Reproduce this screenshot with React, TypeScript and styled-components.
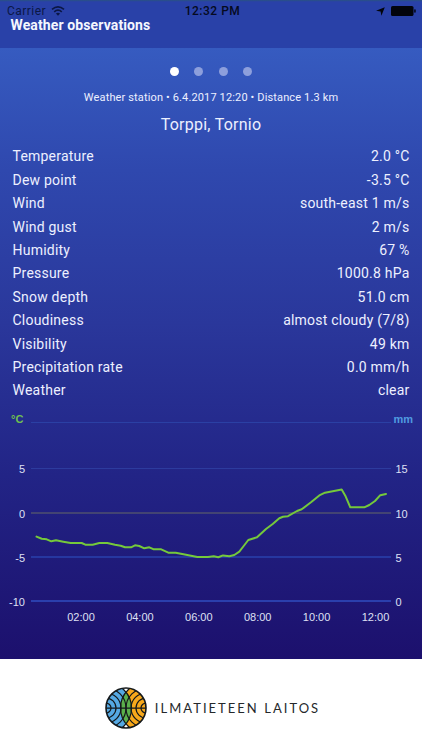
import React from 'react';
import styled, { createGlobalStyle } from 'styled-components';

type Observation = {
  label: string;
  value: string;
};

const OBSERVATIONS: Observation[] = [
  { label: 'Temperature', value: '2.0 °C' },
  { label: 'Dew point', value: '-3.5 °C' },
  { label: 'Wind', value: 'south-east 1 m/s' },
  { label: 'Wind gust', value: '2 m/s' },
  { label: 'Humidity', value: '67 %' },
  { label: 'Pressure', value: '1000.8 hPa' },
  { label: 'Snow depth', value: '51.0 cm' },
  { label: 'Cloudiness', value: 'almost cloudy (7/8)' },
  { label: 'Visibility', value: '49 km' },
  { label: 'Precipitation rate', value: '0.0 mm/h' },
  { label: 'Weather', value: 'clear' },
];

const GRID_LINES = [
  { y: 20.5, left: '', right: '', color: '#2b40a4', width: 1 },
  { y: 66.5, left: '5', right: '15', color: '#2d3b9e', width: 1 },
  { y: 111, left: '0', right: '10', color: '#434473', width: 2 },
  { y: 155, left: '-5', right: '5', color: '#2637a0', width: 2 },
  { y: 199, left: '-10', right: '0', color: '#2b3fad', width: 2 },
];

const HOURS = ['02:00', '04:00', '06:00', '08:00', '10:00', '12:00'];

const TEMPERATURE_POINTS: [number, number][] = [
  [36.5, 134.6], [41.7, 136.7], [46.7, 137.3], [51.3, 139.3], [56, 138.3],
  [63.3, 139.7], [70.7, 141], [81.7, 141], [85.3, 142.7], [92.7, 142.7],
  [99.3, 141], [107.3, 141], [115, 142.7], [120.7, 143.7], [125, 145.3],
  [131, 145.3], [135, 143.3], [139.3, 144], [144.3, 146.3], [149.3, 145.3],
  [153.3, 147.2], [160.7, 147.2], [168.3, 150.7], [175.7, 150.7], [186, 152.7],
  [197.3, 155], [208, 155], [213.7, 154.3], [218.3, 155.3], [223, 153.4],
  [229.3, 154.3], [234.3, 153], [239.3, 149.7], [243.3, 144.5], [248.3, 138],
  [257, 135.3], [266, 127], [272.7, 122], [279.3, 116.3], [283, 114.8],
  [288, 114.2], [297, 109], [301.7, 107.3], [311, 100.3], [319.3, 93.4],
  [325, 90.7], [341.7, 87.6], [345.3, 93.7], [350.3, 105.3], [364.3, 105.3],
  [369.3, 103], [375, 99], [380.3, 93.2], [386, 92],
];

const RINGS = [5, 10, 15, 20, 25.5];

function StatusBar() {
  return (
    <StatusRow>
      <Carrier>
        Carrier
        <svg width="14" height="10" viewBox="0 0 14 10" fill="none" stroke="currentColor">
          <path d="M1 3.4Q7-1.6 13 3.4" strokeWidth="1.7" />
          <path d="M3.2 5.8Q7 2.5 10.8 5.8" strokeWidth="1.6" />
          <path d="M7 9.7L4.9 7.5Q7 5.8 9.1 7.5Z" fill="currentColor" stroke="none" />
        </svg>
      </Carrier>
      <Clock>12:32 PM</Clock>
      <Indicators>
        <svg width="9" height="9" viewBox="0 0 9 9">
          <path d="M8.8 0.2L5.4 8.8L4.6 4.5L0 3.8Z" fill="currentColor" />
        </svg>
        <svg width="25" height="10" viewBox="0 0 25 10" fill="currentColor">
          <rect x="0" y="0" width="22.5" height="10" rx="1.6" />
          <rect x="23.2" y="3.2" width="1.5" height="3.6" rx="0.7" />
        </svg>
      </Indicators>
    </StatusRow>
  );
}

function TemperatureChart() {
  const line = TEMPERATURE_POINTS.map(([x, y]) => `${x},${y}`).join(' ');

  return (
    <Chart width="422" height="251" viewBox="0 6 422 251">
      {GRID_LINES.map(({ y, left, right, color, width }) => (
        <g key={y}>
          <line x1="31" x2="391" y1={y} y2={y} stroke={color} strokeWidth={width} />
          <AxisText x="25" y={y + 4.5} textAnchor="end">
            {left}
          </AxisText>
          <AxisText x="395.5" y={y + 4.5}>
            {right}
          </AxisText>
        </g>
      ))}
      <UnitText x="11" y="21" $color="#70c050">
        °C
      </UnitText>
      <UnitText x="393.5" y="21" $color="#509be0">
        mm
      </UnitText>
      {HOURS.map((hour, i) => (
        <AxisText key={hour} x={81 + i * 58.9} y="218.5" textAnchor="middle">
          {hour}
        </AxisText>
      ))}
      <polyline
        points={line}
        fill="none"
        stroke="#75c93b"
        strokeWidth="2"
        strokeLinejoin="round"
        strokeLinecap="round"
      />
    </Chart>
  );
}

function Logo() {
  return (
    <svg width="42" height="42" viewBox="0 0 42 42">
      <defs>
        <clipPath id="globe">
          <circle cx="21" cy="21" r="20" />
        </clipPath>
        <clipPath id="west">
          <circle cx="1" cy="21" r="25.5" />
        </clipPath>
      </defs>
      <circle cx="21" cy="21" r="20" fill="#fff" />
      <g clipPath="url(#globe)">
        <circle cx="1" cy="21" r="25.5" fill="#55a9e3" />
        <circle cx="41" cy="21" r="25.5" fill="#f7a81b" />
        <circle cx="41" cy="21" r="25.5" fill="#5bb04c" clipPath="url(#west)" />
        <g fill="none" stroke="#15191b" strokeWidth="1.25">
          {RINGS.map((r) => (
            <React.Fragment key={r}>
              <circle cx="1" cy="21" r={r} />
              <circle cx="41" cy="21" r={r} />
            </React.Fragment>
          ))}
          <path d="M1 21H41" />
        </g>
      </g>
      <circle cx="21" cy="21" r="20" fill="none" stroke="#15191b" strokeWidth="1.6" />
    </svg>
  );
}

export default function App() {
  return (
    <Screen>
      <GlobalStyle />
      <Header>
        <StatusBar />
        <Title>Weather observations</Title>
      </Header>
      <Content>
        <Pager>
          {[0, 1, 2, 3].map((page) => (
            <Dot key={page} $active={page === 0} />
          ))}
        </Pager>
        <Station>Weather station • 6.4.2017 12:20 • Distance 1.3 km</Station>
        <Place>Torppi, Tornio</Place>
        <List>
          {OBSERVATIONS.map(({ label, value }) => (
            <Row key={label}>
              <span>{label}</span>
              <span>{value}</span>
            </Row>
          ))}
        </List>
        <TemperatureChart />
      </Content>
      <Footer>
        <Logo />
        <Brand>ILMATIETEEN LAITOS</Brand>
      </Footer>
    </Screen>
  );
}

const GlobalStyle = createGlobalStyle`
  body {
    margin: 0;
    background: #fff;
  }
`;

const Screen = styled.div`
  display: flex;
  flex-direction: column;
  width: 422px;
  height: 750px;
  overflow: hidden;
  font-family: Roboto, 'Liberation Sans', sans-serif;
  color: #edf0ff;
`;

const Header = styled.header`
  box-sizing: border-box;
  height: 48px;
  background: linear-gradient(#29547f 0, #29479a 1px, #2941a8 2px);
`;

const StatusRow = styled.div`
  display: grid;
  grid-template-columns: 1fr auto 1fr;
  align-items: center;
  box-sizing: border-box;
  height: 18px;
  padding: 4px 6px 0 7px;
  font-size: 12px;
  line-height: 14px;
  color: #050a20;
`;

const Carrier = styled.div`
  display: flex;
  align-items: center;
  gap: 5px;
  letter-spacing: 0.45px;
  color: #0b1745;
`;

const Clock = styled.div`
  padding-left: 2px;
  font-weight: 500;
  letter-spacing: 0.5px;
`;

const Indicators = styled.div`
  display: flex;
  align-items: center;
  justify-content: flex-end;
  gap: 6px;
  color: #02040c;
`;

const Title = styled.h1`
  margin: -1px 0 0 10.5px;
  font-size: 14px;
  font-weight: 700;
  line-height: 16px;
  letter-spacing: 0.12px;
  color: #f5f7ff;
`;

const Content = styled.main`
  display: flex;
  flex-direction: column;
  height: 611px;
  background: linear-gradient(#365bc0 0%, #2f48ae 20%, #2a379b 45%, #222486 70%, #1c106d 100%);
`;

const Pager = styled.div`
  display: flex;
  justify-content: center;
  gap: 15.5px;
  padding-top: 19px;
`;

const Dot = styled.span<{ $active: boolean }>`
  width: 9px;
  height: 9px;
  border-radius: 50%;
  background: ${({ $active }) => ($active ? '#fff' : '#8d9fdc')};
`;

const Station = styled.p`
  margin: 15px 0 0;
  font-size: 11px;
  line-height: 14px;
  letter-spacing: 0.14px;
  text-align: center;
`;

const Place = styled.h2`
  margin: 10px 0 0;
  font-size: 16px;
  font-weight: 400;
  line-height: 20px;
  letter-spacing: 0.24px;
  text-align: center;
`;

const List = styled.div`
  display: flex;
  flex-direction: column;
  padding: 10.4px 12.5px 0;
`;

const Row = styled.div`
  display: flex;
  justify-content: space-between;
  height: 23.4px;
  font-size: 14px;
  line-height: 23.4px;
  letter-spacing: 0.22px;
`;

const Chart = styled.svg`
  display: block;
  flex-shrink: 0;
  margin-top: auto;
  font-family: 'Liberation Sans', Arial, sans-serif;
`;

const AxisText = styled.text`
  font-size: 11px;
  fill: #dfe0f4;
`;

const UnitText = styled.text<{ $color: string }>`
  font-size: 11px;
  font-weight: 700;
  fill: ${({ $color }) => $color};
`;

const Footer = styled.footer`
  display: flex;
  align-items: center;
  justify-content: center;
  gap: 8px;
  flex: 1;
  padding: 7px 0 0 3px;
  background: #fff;
`;

const Brand = styled.span`
  font-family: Lato, sans-serif;
  font-size: 13px;
  letter-spacing: 2.03px;
  color: #25282b;
`;
